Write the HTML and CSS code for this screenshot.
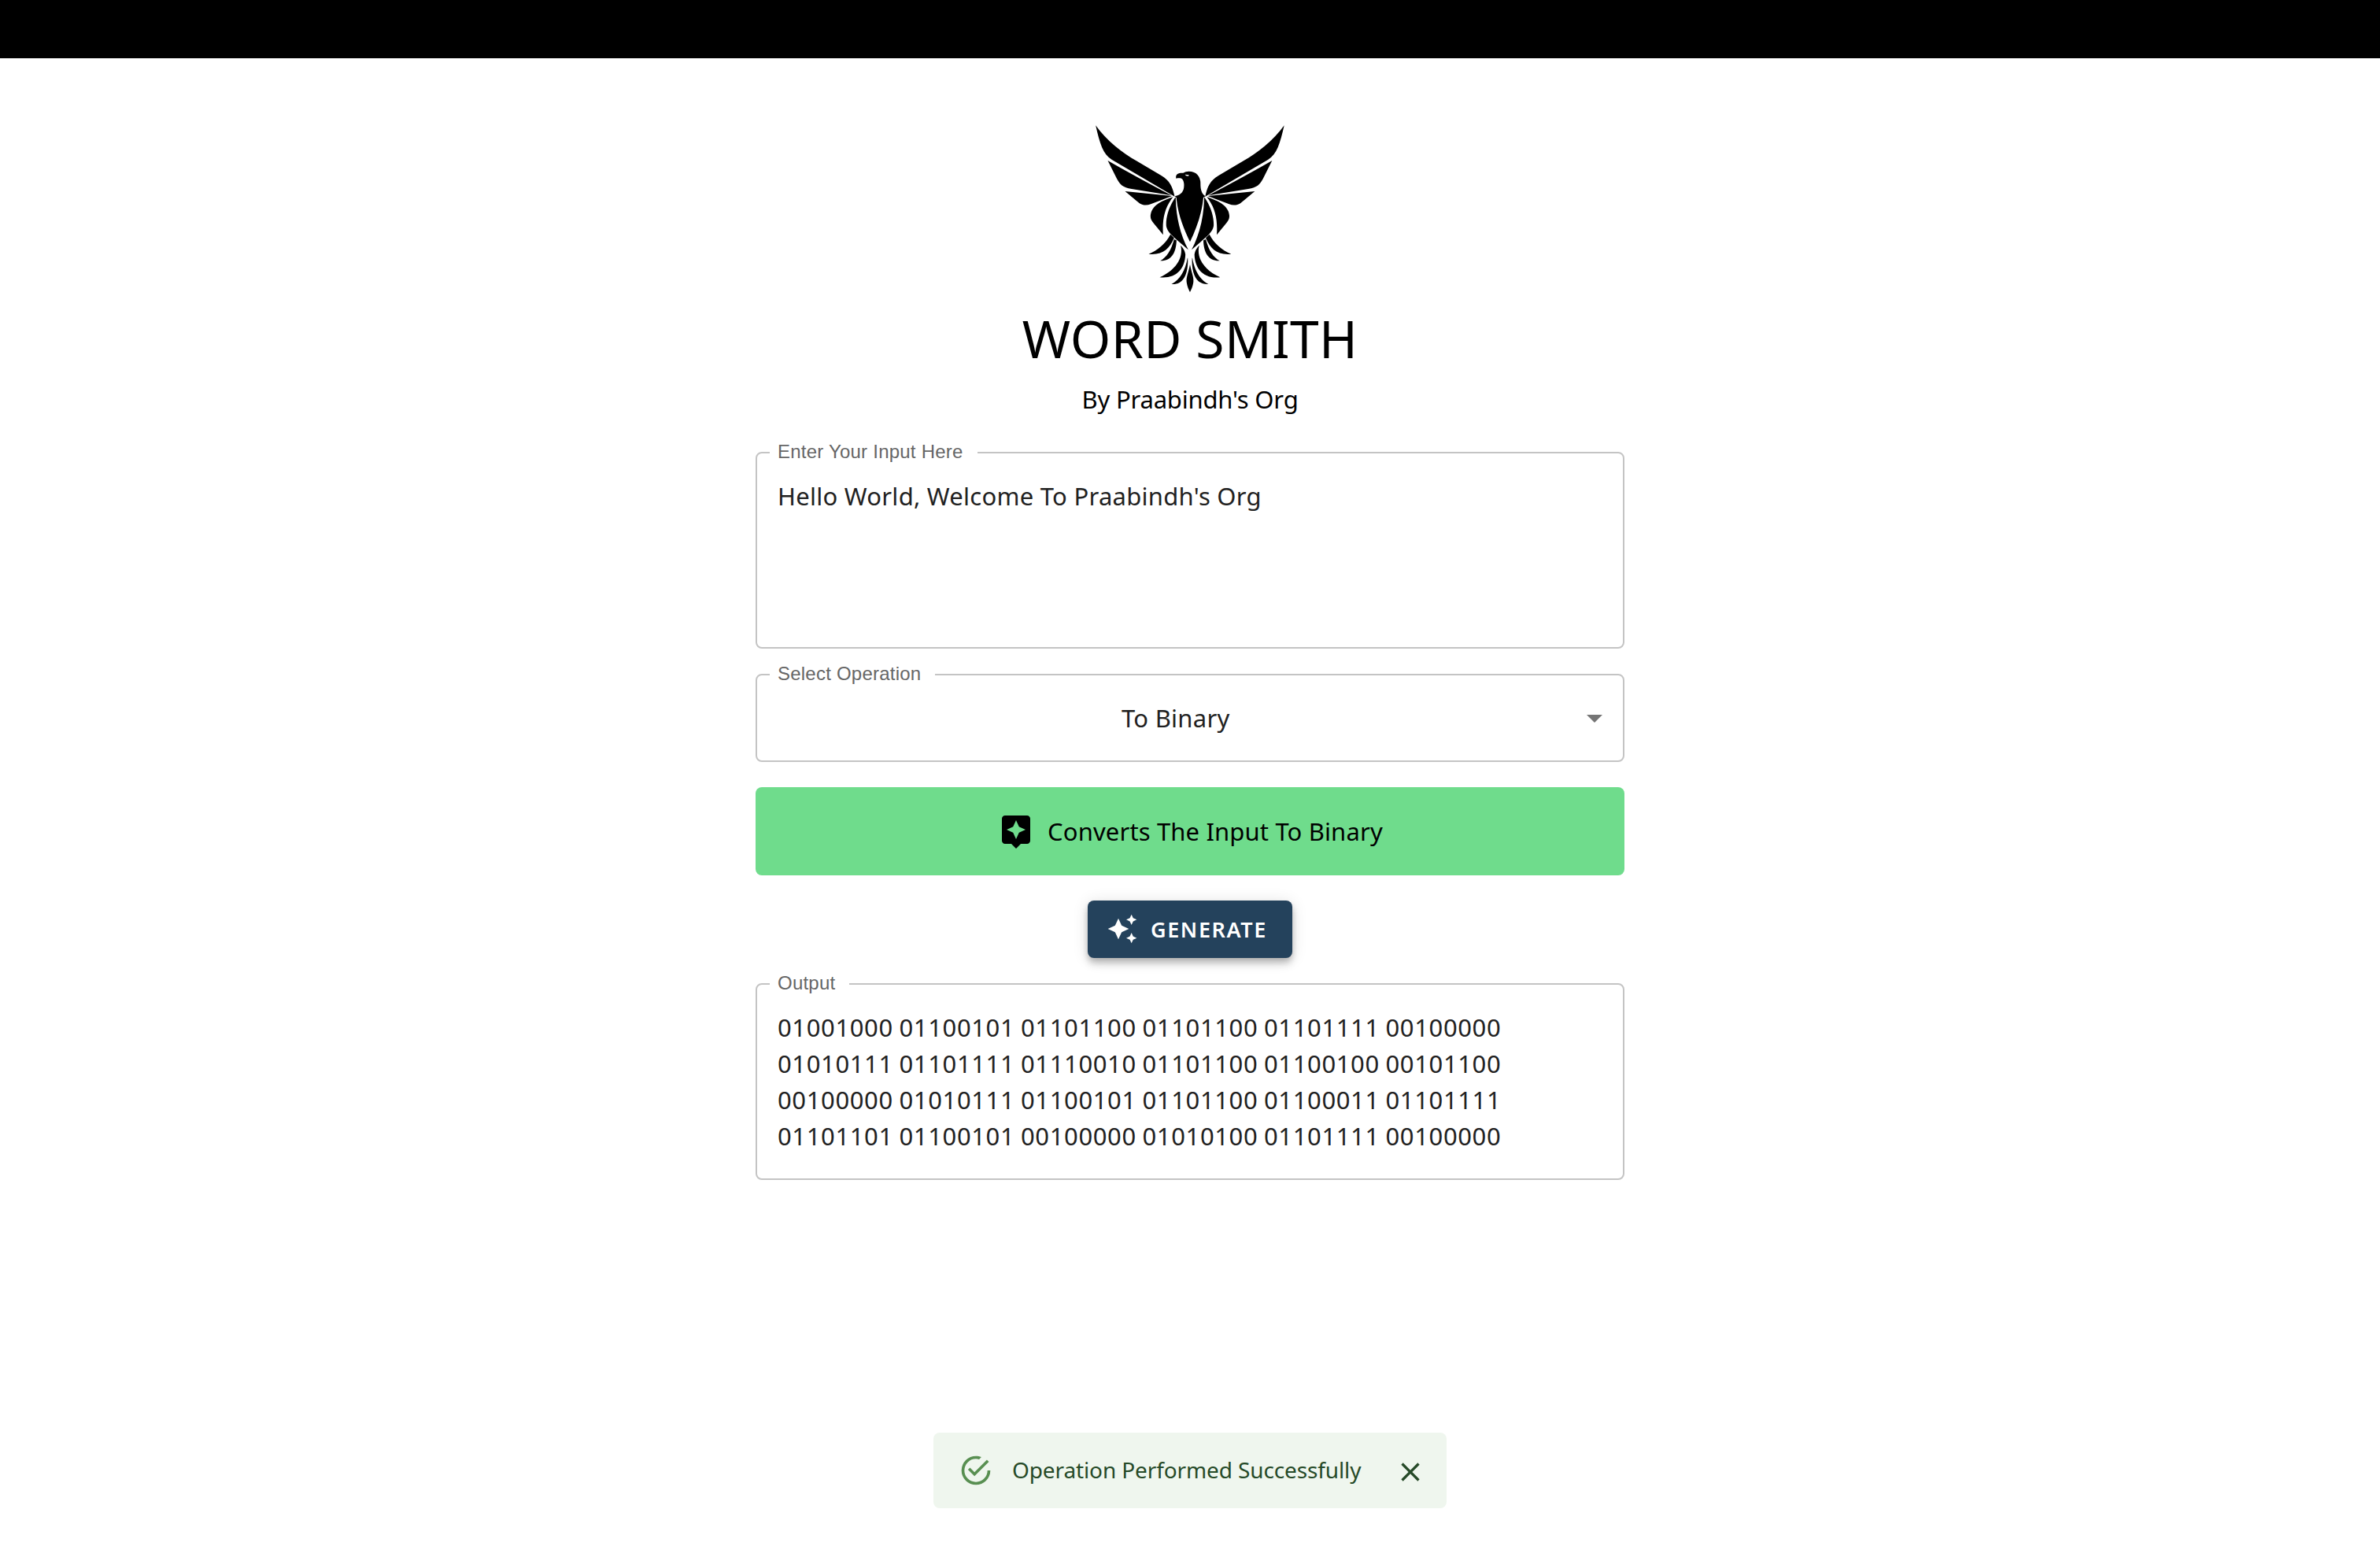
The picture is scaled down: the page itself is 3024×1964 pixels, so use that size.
FILE: index.html
```html
<!DOCTYPE html>
<html lang="en">
<head>
<meta charset="utf-8">
<title>Word Smith</title>
<link rel="stylesheet" href="styles.css">
</head>
<body>
<header class="topbar"></header>
<main class="content">
  <svg class="logo" viewBox="0 0 795 690" aria-hidden="true">
    <defs>
      <g id="wing">
        <path d="M755 28C715 85 650 135 600 163L505 219C472 239 462 262 454 299Q590 219 694 158C727 139 740 95 755 28Z"/>
        <path d="M709 162Q610 219 466 295L618 270C652 265 662 254 674 232Z"/>
        <path d="M643 279L464 297L545 328C560 334 575 333 588 325Z"/>
        <path d="M460 301C500 314 530 328 542 355C549 375 547 385 535 400L498 445C502 385 492 340 460 301Z"/>
        <path d="M452 303C480 345 488 385 486 412C480 440 455 455 402 502C435 440 449 370 450 303Z"/>
        <path d="M470 443C488 478 518 503 553 518C500 523 475 500 456 457Z"/>
        <path d="M456 462C468 505 484 530 509 544C468 546 448 515 447 466Z"/>
        <path d="M431 485C419 536 453 580 511 607C450 613 415 578 413 520C416 502 422 496 431 485Z"/>
        <path d="M405 533C413 580 433 615 466 633C424 636 401 600 404 533Z"/>
      </g>
    </defs>
    <use href="#wing"/>
    <use href="#wing" transform="translate(791.5 0) scale(-1 1)"/>
    <path d="M396 558C402 590 411 605 409 625C406 645 400 655 396 664C392 655 386 645 383 625C381 605 390 590 396 558Z"/>
    <path d="M343 230C340 214 350 208 370 209C377 205 382 203 391 203C423 203 437 225 436 250C436 275 441 290 455 298L447 303C440 370 420 420 396 472C372 420 350 370 344 303L338 298C366 292 375 275 373 250C371 228 360 227 343 230Z"/>
    <path class="logo-eye" d="M377 215L392 217L390 221L381 220Z"/>
  </svg>
  <h1 class="title">WORD SMITH</h1>
  <p class="subtitle">By Praabindh's Org</p>

  <fieldset class="field field-multiline">
    <legend class="label">Enter Your Input Here</legend>
    <div class="value value-input">Hello World, Welcome To Praabindh's Org</div>
  </fieldset>

  <fieldset class="field field-select">
    <legend class="label">Select Operation</legend>
    <div class="select-row">
      <span class="select-value">To Binary</span>
      <svg class="arrow" viewBox="0 0 20 10"><path d="M0 0h20L10 10z"/></svg>
    </div>
  </fieldset>

  <div class="banner">
    <svg class="banner-icon" viewBox="0 0 24 24"><path d="M19 2H5c-1.11 0-2 .9-2 2v14c0 1.1.89 2 2 2h4l3 3 3-3h4c1.1 0 2-.9 2-2V4c0-1.1-.9-2-2-2zm-5.12 10.88L12 17l-1.88-4.12L6 11l4.12-1.88L12 5l1.88 4.12L18 11l-4.12 1.88z"/></svg>
    <span class="banner-text">Converts The Input To Binary</span>
  </div>

  <button class="generate" type="button">
    <svg class="generate-icon" viewBox="0 0 24 24"><path d="M19 9l1.25-2.75L23 5l-2.75-1.25L19 1l-1.25 2.75L15 5l2.75 1.25L19 9zm-7.5.5L9 4 6.5 9.5 1 12l5.5 2.5L9 20l2.5-5.5L17 12l-5.5-2.5zM19 15l-1.25 2.75L15 19l2.75 1.25L19 23l1.25-2.75L23 19l-2.75-1.25L19 15z"/></svg>
    <span class="generate-text">GENERATE</span>
  </button>

  <fieldset class="field field-multiline">
    <legend class="label">Output</legend>
    <div class="value value-output">01001000 01100101 01101100 01101100 01101111 00100000<br>01010111 01101111 01110010 01101100 01100100 00101100<br>00100000 01010111 01100101 01101100 01100011 01101111<br>01101101 01100101 00100000 01010100 01101111 00100000</div>
  </fieldset>
</main>

<div class="snackbar" role="alert">
  <svg class="snackbar-icon" viewBox="0 0 24 24"><path d="M20,12A8,8 0 0,1 12,20A8,8 0 0,1 4,12A8,8 0 0,1 12,4C12.76,4 13.5,4.11 14.2,4.31L15.77,2.74C14.61,2.26 13.34,2 12,2A10,10 0 0,0 2,12A10,10 0 0,0 12,22A10,10 0 0,0 22,12H20M7.91,10.08L6.5,11.5L11,16L21,6L19.59,4.58L11,13.17L7.91,10.08Z"/></svg>
  <span class="snackbar-text">Operation Performed Successfully</span>
  <svg class="snackbar-close" viewBox="0 0 24 24"><path d="M19 6.41L17.59 5 12 10.59 6.41 5 5 6.41 10.59 12 5 17.59 6.41 19 12 13.41 17.59 19 19 17.59 13.41 12z"/></svg>
</div>
</body>
</html>
```
FILE: styles.css
```css
* { box-sizing: border-box; }

body {
  margin: 0;
  height: 1964px;
  display: flex;
  flex-direction: column;
  align-items: center;
  background: #fff;
  color: #000;
  font-family: "Noto Sans", "Open Sans", sans-serif;
  font-size: 31px;
  overflow: hidden;
}

svg { display: block; flex: none; }

.topbar { width: 100%; height: 74px; background: #000; flex: none; }

.content {
  width: 1104px;
  padding-top: 76px;
  display: flex;
  flex-direction: column;
  align-items: center;
}

.logo { width: 265px; height: 230px; margin-left: 1px; }
.logo-eye { fill: #fff; }

.title {
  margin: 9px 0 0;
  font-size: 66px;
  font-weight: 400;
  line-height: 80px;
  letter-spacing: 0.4px;
  white-space: nowrap;
}

.subtitle {
  margin: 14px 0 43px;
  line-height: 48px;
  letter-spacing: -0.2px;
  white-space: nowrap;
}

.field {
  width: 100%;
  min-width: 0;
  margin: 0;
  padding: 0 16px;
  border: 2px solid #c4c4c4;
  border-radius: 8px;
}

.field-multiline { height: 250px; margin-bottom: 32px; }
.field-select { height: 112px; margin-bottom: 32px; }

.label {
  height: 2px;
  padding: 0 18px 0 10px;
  font-family: "Liberation Sans", Arial, sans-serif;
  font-size: 24px;
  line-height: 0;
  letter-spacing: 0.225px;
  color: #666;
  white-space: nowrap;
}

.value {
  padding: 31px 0 0 10px;
  line-height: 46px;
  color: #212121;
  white-space: nowrap;
}

.value-input { letter-spacing: 0.26px; }
.value-output { letter-spacing: 0.62px; word-spacing: -1px; }

.select-row {
  height: 108px;
  padding: 0 10px 0 447px;
  display: flex;
  align-items: center;
  justify-content: space-between;
  letter-spacing: 0.26px;
  color: #212121;
}

.arrow { width: 20px; height: 10px; fill: #757575; margin-top: 2px; }

.banner {
  width: 100%;
  height: 112px;
  margin-bottom: 32px;
  padding-left: 307px;
  display: flex;
  align-items: center;
  gap: 16px;
  background: #6fdc8c;
  border-radius: 8px;
  letter-spacing: 0.14px;
  white-space: nowrap;
}

.banner-icon { width: 48px; height: 48px; margin-top: -1px; }

.generate {
  width: 260px;
  height: 73px;
  margin: 0 0 32px;
  padding: 0 0 0 24px;
  display: flex;
  align-items: center;
  gap: 16px;
  border: 0;
  border-radius: 8px;
  background: #24425c;
  color: #fff;
  fill: #fff;
  font: 600 27px/48px "Noto Sans", "Open Sans", sans-serif;
  letter-spacing: 1.6px;
  box-shadow: 0 4px 8px -2px rgba(0, 0, 0, .2), 0 8px 10px rgba(0, 0, 0, .14), 0 2px 20px rgba(0, 0, 0, .12);
}

.generate-icon { width: 40px; height: 40px; margin-top: -1px; }

.snackbar {
  width: 652px;
  height: 96px;
  margin: auto 0 48px;
  padding: 0 26px 0 32px;
  display: flex;
  align-items: center;
  border-radius: 8px;
  background: #eff6ee;
  color: #264a28;
  font-size: 28px;
  letter-spacing: -0.12px;
  white-space: nowrap;
}

.snackbar-icon { width: 44px; height: 44px; fill: #588f51; }
.snackbar-text { margin: -2px 0 0 24px; }
.snackbar-close { width: 40px; height: 40px; margin-left: auto; margin-top: 3px; fill: #264a28; }
```
